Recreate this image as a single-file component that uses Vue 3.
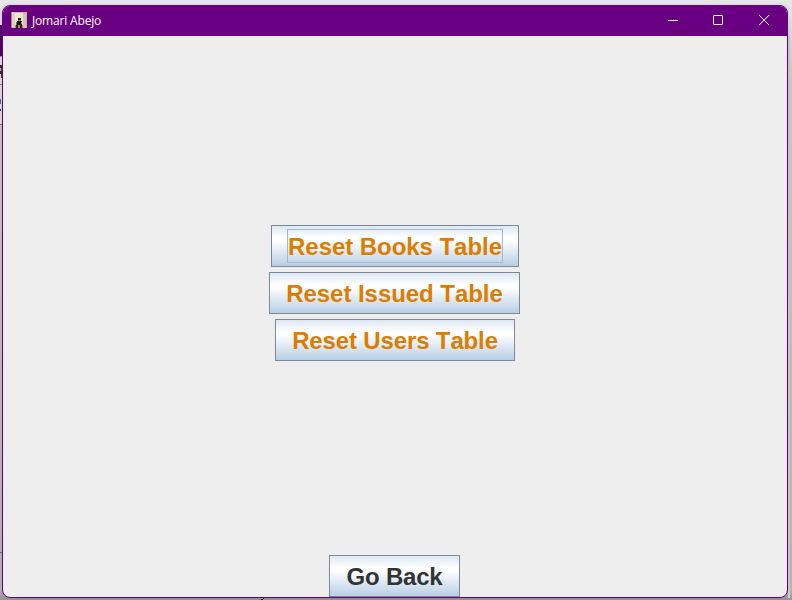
<script setup>
const resets = [
  { label: 'Reset Books Table', kind: 'books', focused: true },
  { label: 'Reset Issued Table', kind: 'issued', focused: false },
  { label: 'Reset Users Table', kind: 'users', focused: false },
]
</script>

<template>
  <div class="desktop">
    <svg class="backdrop" width="792" height="600" shape-rendering="crispEdges" aria-hidden="true">
      <rect x="0" y="25" width="3" height="31" fill="#520066" />
      <rect x="0" y="56" width="2" height="1" fill="#8a9aa5" />
      <rect x="0" y="57" width="2" height="67" fill="#dedede" />
      <rect x="0" y="65" width="2" height="3" fill="#333" />
      <rect x="0" y="68" width="1" height="3" fill="#e0b080" />
      <rect x="1" y="68" width="1" height="3" fill="#604030" />
      <rect x="0" y="71" width="2" height="3" fill="#252a35" />
      <rect x="1" y="74" width="1" height="4" fill="#703830" />
      <rect x="0" y="84" width="2" height="1" fill="#777d82" />
      <rect x="0" y="99" width="1" height="5" fill="#2878c0" />
      <rect x="0" y="109" width="1" height="2" fill="#283878" />
      <rect x="0" y="124" width="2" height="1" fill="#70757a" />
      <rect x="0" y="552" width="2" height="1" fill="#6b7075" />
      <rect x="788" y="36" width="2" height="562" fill="#cdcdcd" />
      <rect x="261" y="599" width="2" height="1" fill="#111" />
      <rect x="263" y="598" width="1" height="1" fill="#111" />
    </svg>
    <main class="window">
      <header class="titlebar">
        <svg class="avatar" width="16" height="16" viewBox="0 0 16 16" shape-rendering="crispEdges">
          <rect width="16" height="16" fill="#c9b8a4" />
          <rect x="1" width="3" height="15" fill="#ded2c1" />
          <rect x="4" y="1" width="8" height="12" fill="#eee4d0" />
          <rect x="12" y="2" width="3" height="14" fill="#d4c5b0" />
          <rect x="0" y="0" width="1" height="16" fill="#9c8d7e" />
          <rect x="4" y="13" width="8" height="3" fill="#b68765" />
          <rect x="7" y="6" width="3" height="2" fill="#26201e" />
          <rect x="7" y="8" width="3" height="1" fill="#a87558" />
          <rect x="6" y="9" width="5" height="4" fill="#18191d" />
          <rect x="5" y="10" width="1" height="3" fill="#9b6c50" />
          <rect x="10" y="10" width="1" height="2" fill="#bb8966" />
          <rect x="5" y="13" width="2" height="3" fill="#2b211e" />
          <rect x="9" y="13" width="2" height="3" fill="#302521" />
        </svg>
        <span class="title">Jomari Abejo</span>
        <div class="controls">
          <svg width="46" height="30" viewBox="0 0 46 30"><path d="M18 14.5H28" /></svg>
          <svg width="46" height="30" viewBox="0 0 46 30"><rect x="17.5" y="9.5" width="9" height="9" rx=".5" /></svg>
          <svg width="46" height="30" viewBox="0 0 46 30"><path d="M17.2 9.2L27 19M27 9.2L17.2 19" /></svg>
        </div>
      </header>
      <section class="content">
        <div class="resets">
          <button v-for="r in resets" :key="r.kind" :class="['btn', r.kind, { focused: r.focused }]">
            <span class="label">{{ r.label }}</span>
          </button>
        </div>
        <button class="btn back"><span class="label">Go Back</span></button>
      </section>
    </main>
  </div>
</template>

<style>
body { margin: 0; overflow: hidden; }
</style>

<style scoped>
.desktop {
  box-sizing: border-box;
  position: relative;
  width: 792px;
  height: 600px;
  padding: 5px 4px 2px 2px;
  background: linear-gradient(180deg, #e9e9e9 0, #dedede 24px, #c8c8c8 80px, #b6b6b6 590px, #999 598px);
}
.backdrop { position: absolute; left: 0; top: 0; }
.window {
  position: relative;
  box-sizing: border-box;
  width: 786px;
  height: 593px;
  display: flex;
  flex-direction: column;
  border: 1px solid #690081;
  border-radius: 8px;
  overflow: hidden;
  background: #eee;
  box-shadow: 0 0 4px rgba(0, 0, 0, .12);
}
.titlebar {
  flex: none;
  height: 30px;
  display: flex;
  align-items: center;
  padding-left: 8px;
  background: #690081;
}
.avatar { flex: none; margin-top: -2px; }
.title {
  margin-left: 5px;
  font: 12px/16px "Open Sans", "Noto Sans", sans-serif;
  letter-spacing: -.17px;
  color: #fff;
}
.controls { display: flex; margin-left: auto; margin-right: -1px; }
.controls svg { display: block; fill: none; stroke: #fff; stroke-width: 1; }
.content {
  flex: 1;
  display: flex;
  flex-direction: column;
  align-items: center;
  justify-content: space-between;
  padding-top: 189px;
}
.resets { display: flex; flex-direction: column; align-items: center; gap: 5px; }
.btn {
  box-sizing: border-box;
  height: 42px;
  margin: 0;
  padding: 0;
  display: flex;
  align-items: center;
  justify-content: center;
  border: 1px solid #7a8a99;
  border-radius: 0;
  background: linear-gradient(180deg, #dde8f3 0, #fff 30%, #fff 36%, #b8cfe5 100%);
  font: bold 24px/28px "Liberation Sans", Arial, sans-serif;
  font-kerning: none;
  color: #dc7d00;
  white-space: nowrap;
}
.label { box-sizing: border-box; height: 34px; padding: 3px 0; border: 1px solid transparent; }
.focused .label { width: 216px; border-color: #a3b8cc; }
.books { width: 248px; letter-spacing: -.05px; }
.issued { width: 251px; margin-right: 1px; letter-spacing: -.05px; }
.users { width: 240px; letter-spacing: -.14px; }
.back { width: 131px; margin-right: 1px; color: #333; letter-spacing: -.2px; }
</style>
